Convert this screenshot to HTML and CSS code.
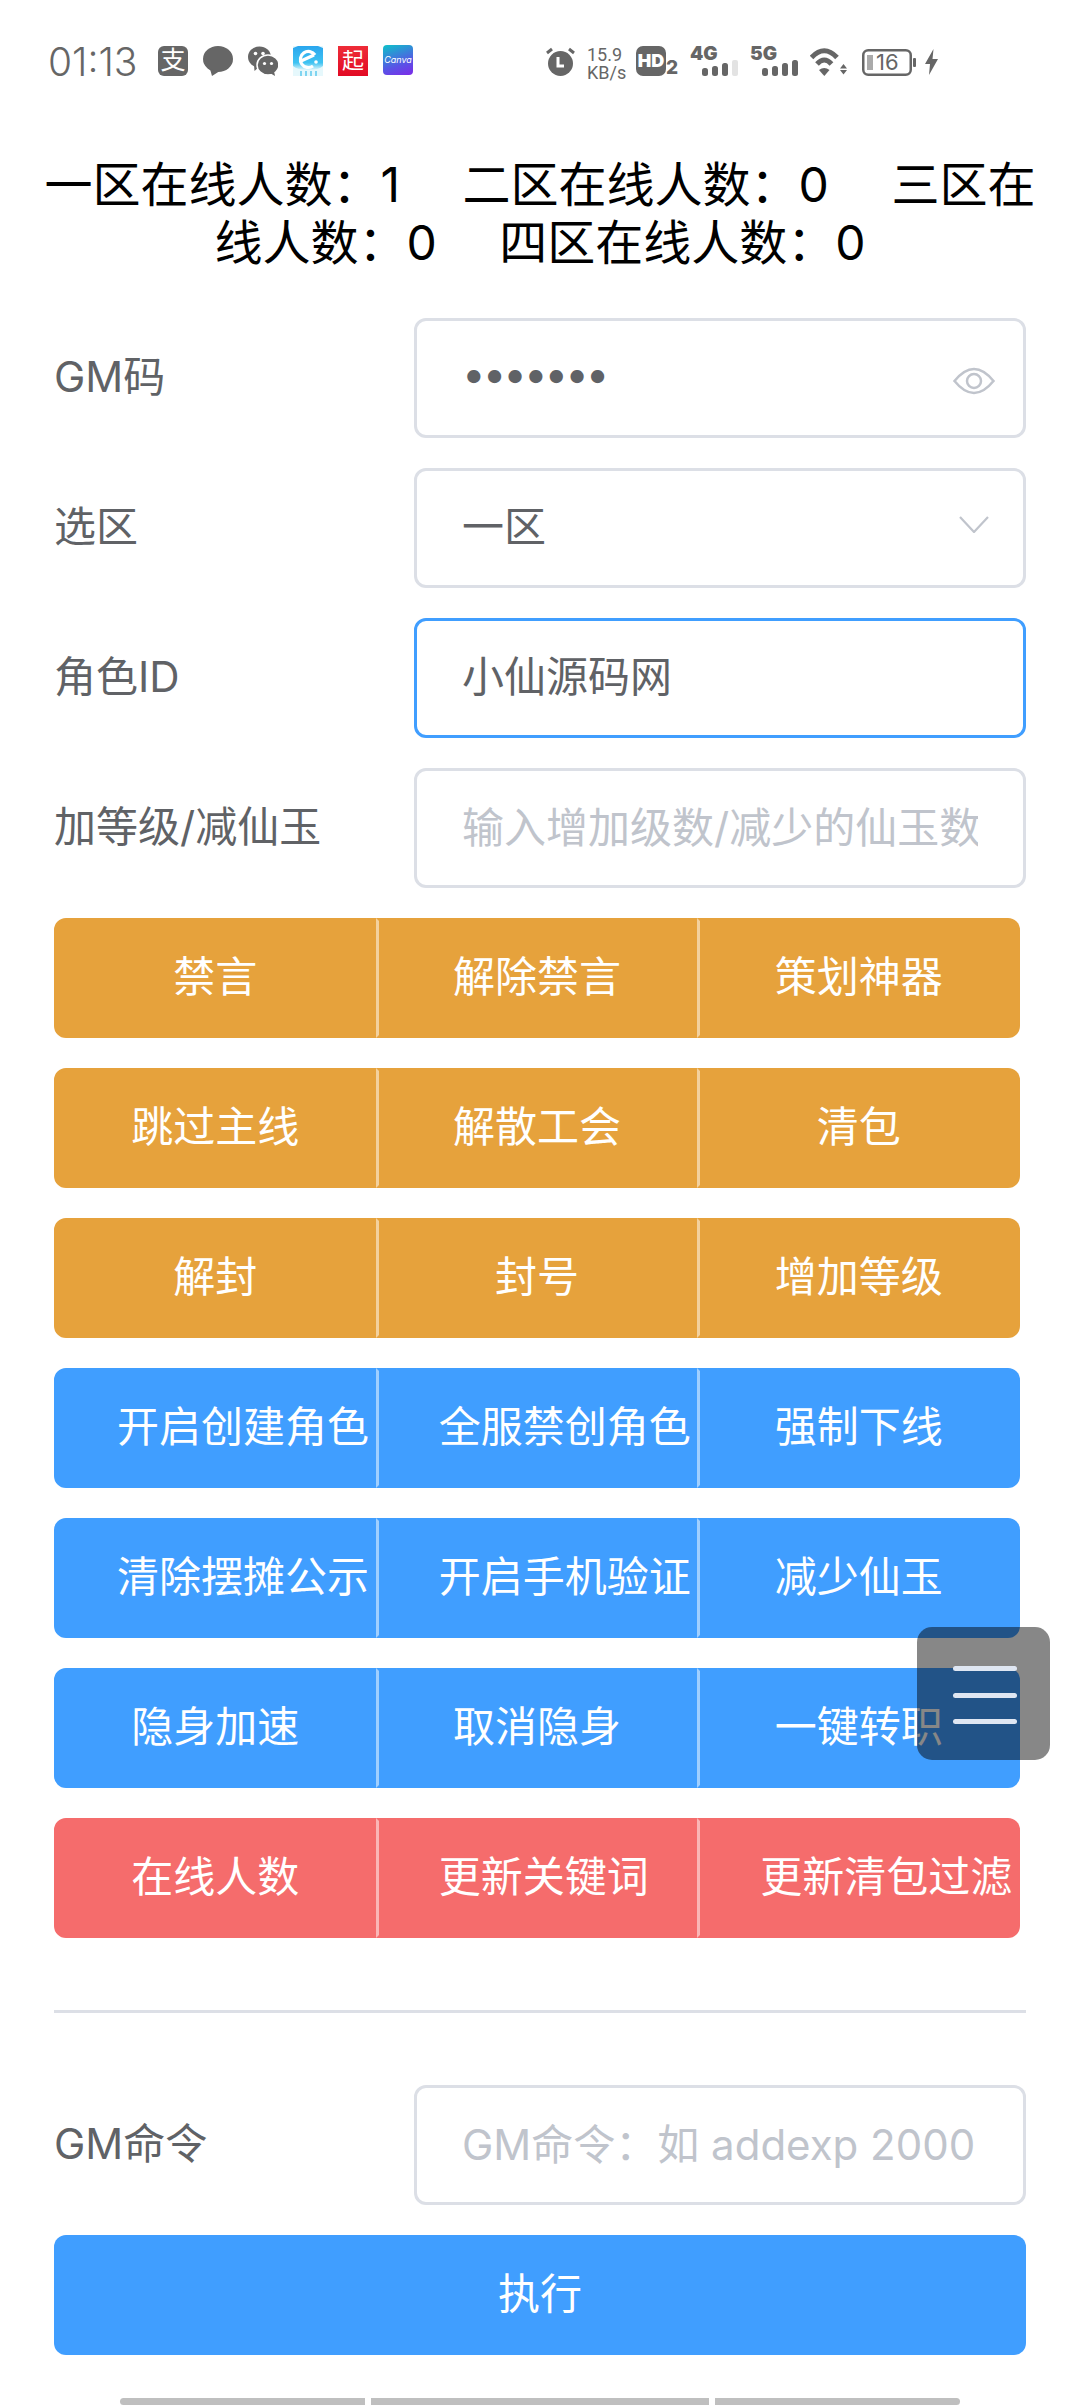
FILE: index.html
```html
<!DOCTYPE html>
<html lang="zh-CN">
<head>
  <meta charset="UTF-8">
  <meta name="viewport" content="width=device-width, initial-scale=1.0">
  <title>GM</title>
  <link rel="stylesheet" href="styles.css">
</head>
<body>
  <div class="status-bar">
    <div class="status-left">
      <span class="time">01:13</span>
      <span class="ic ic-alipay">支</span>
      <svg class="ic" viewBox="0 0 30 30"><ellipse cx="15" cy="13" rx="15" ry="13" fill="#666"/><path d="M7 23 L9 30 L16 25.5 Z" fill="#666"/></svg>
      <svg class="ic" viewBox="0 0 30 30">
        <ellipse cx="11.5" cy="11" rx="11.5" ry="10.5" fill="#666"/>
        <path d="M6 19 L6.5 25 L12 20 Z" fill="#666"/>
        <circle cx="7.5" cy="7.5" r="1.8" fill="#fff"/><circle cx="15" cy="7.5" r="1.8" fill="#fff"/>
        <ellipse cx="20" cy="19" rx="11" ry="10" fill="#666" stroke="#fff" stroke-width="1.5"/>
        <path d="M22 27 L27 30 L26 25 Z" fill="#666"/>
        <circle cx="16.5" cy="17.5" r="1.6" fill="#fff"/><circle cx="23.5" cy="17.5" r="1.6" fill="#fff"/>
      </svg>
      <svg class="ic" viewBox="0 0 30 30">
        <defs><linearGradient id="eg" x1="0" y1="0" x2="0" y2="1"><stop offset="0" stop-color="#2aa6ee"/><stop offset=".7" stop-color="#3fc3f2"/><stop offset="1" stop-color="#dff6fb"/></linearGradient></defs>
        <rect width="30" height="30" fill="#e6f8fc"/>
        <path d="M0 2 L5 0 H25 L30 2 V20 Q26 24 15 24 Q4 24 0 20 Z" fill="url(#eg)"/>
        <path d="M22 9 A8 8 0 1 0 20 20 M8 15 L21 9" fill="none" stroke="#fff" stroke-width="3.2"/>
        <circle cx="23" cy="16" r="1.8" fill="#fff"/>
        <path d="M8 25 V30 M13 25 V30 M18 25 V30 M23 25 V30" stroke="#7fd4f0" stroke-width="2"/>
      </svg>
      <span class="ic ic-qi">起</span>
      <span class="ic ic-canva">Canva</span>
    </div>
    <div class="status-right">
      <svg class="ic-alarm" viewBox="0 0 29 30">
        <circle cx="14.5" cy="17.5" r="12.5" fill="#666"/>
        <path d="M1 7 L6 3 M28 7 L23 3" stroke="#666" stroke-width="3"/>
        <path d="M12 11 V20 H18" fill="none" stroke="#fff" stroke-width="3"/>
      </svg>
      <div class="speed"><div>15.9</div><div>KB/s</div></div>
      <span class="ic-hd">HD</span><span class="hd-num">2</span>
      <svg class="signal" viewBox="0 -8 48 38">
        <text x="0" y="14" class="signal-text">4G</text>
        <rect x="12" y="22" width="6" height="8" rx="2.5" fill="#666"/>
        <rect x="22" y="20" width="6" height="10" rx="2.5" fill="#666"/>
        <rect x="32" y="17" width="6" height="13" rx="2.5" fill="#666"/>
        <rect x="42" y="14" width="6" height="16" rx="2" fill="#e3e3e3"/>
      </svg>
      <svg class="signal" viewBox="0 -8 48 38">
        <text x="0" y="14" class="signal-text">5G</text>
        <rect x="12" y="22" width="6" height="8" rx="2.5" fill="#666"/>
        <rect x="22" y="20" width="6" height="10" rx="2.5" fill="#666"/>
        <rect x="32" y="17" width="6" height="13" rx="2.5" fill="#666"/>
        <rect x="42" y="14" width="6" height="16" rx="2.5" fill="#666"/>
      </svg>
      <svg class="wifi" viewBox="0 0 37 29">
        <path d="M1.5 10.5 Q14.3 -3 27 10.5 M7 17 Q14.3 9 21.5 17" fill="none" stroke="#666" stroke-width="5"/>
        <path d="M9 23 L14.3 29 L19.5 23 Q14.3 19 9 23 Z" fill="#666"/>
        <path d="M30 21.5 L33.5 17 L37 21.5 Z M30 23 L37 23 L33.5 27.5 Z" fill="#666"/>
      </svg>
      <svg class="battery" viewBox="0 0 54 27">
        <rect x="1.25" y="1.25" width="47.5" height="24.5" rx="5" fill="none" stroke="#666" stroke-width="2.5"/>
        <rect x="5" y="6" width="6" height="15" fill="#aaa"/>
        <text x="14" y="21" class="battery-text">16</text>
        <rect x="51" y="9" width="3" height="9" rx="1" fill="#666"/>
      </svg>
      <svg class="bolt" viewBox="0 0 13 26"><path d="M8.5 0 L0 15 H5 L4 26 L13 10 H7.5 Z" fill="#666"/></svg>
    </div>
  </div>

  <p class="online">一区在线人数：1 &nbsp;&nbsp;&nbsp; 二区在线人数：0 &nbsp;&nbsp;&nbsp; 三区在线人数：0 &nbsp;&nbsp;&nbsp; 四区在线人数：0</p>

  <div class="form-row">
    <label class="form-label">GM码</label>
    <div class="input-wrap">
      <input class="input input-pass" type="password" value="1234567">
      <svg class="input-icon eye" viewBox="0 0 42 30">
        <path d="M1.5 15 Q21 -9 40.5 15 Q21 39 1.5 15 Z" fill="none" stroke="#c0c4cc" stroke-width="2.5"/>
        <circle cx="21" cy="15" r="7" fill="none" stroke="#c0c4cc" stroke-width="2.5"/>
      </svg>
    </div>
  </div>
  <div class="form-row">
    <label class="form-label">选区</label>
    <div class="input-wrap">
      <input class="input" type="text" value="一区" readonly>
      <svg class="input-icon chevron" viewBox="0 0 30 17"><path d="M1 1 L15 16 L29 1" fill="none" stroke="#c0c4cc" stroke-width="2.2"/></svg>
    </div>
  </div>
  <div class="form-row">
    <label class="form-label">角色ID</label>
    <div class="input-wrap">
      <input class="input is-focus" type="text" value="小仙源码网">
    </div>
  </div>
  <div class="form-row">
    <label class="form-label">加等级/减仙玉</label>
    <div class="input-wrap">
      <input class="input" type="text" placeholder="输入增加级数/减少的仙玉数">
    </div>
  </div>

  <div class="btn-group">
    <button class="btn warning">禁言</button>
    <button class="btn warning">解除禁言</button>
    <button class="btn warning">策划神器</button>
  </div>
  <div class="btn-group">
    <button class="btn warning">跳过主线</button>
    <button class="btn warning">解散工会</button>
    <button class="btn warning">清包</button>
  </div>
  <div class="btn-group">
    <button class="btn warning">解封</button>
    <button class="btn warning">封号</button>
    <button class="btn warning">增加等级</button>
  </div>
  <div class="btn-group">
    <button class="btn primary">开启创建角色</button>
    <button class="btn primary">全服禁创角色</button>
    <button class="btn primary">强制下线</button>
  </div>
  <div class="btn-group">
    <button class="btn primary">清除摆摊公示</button>
    <button class="btn primary">开启手机验证</button>
    <button class="btn primary">减少仙玉</button>
  </div>
  <div class="btn-group">
    <button class="btn primary">隐身加速</button>
    <button class="btn primary">取消隐身</button>
    <button class="btn primary">一键转职</button>
  </div>
  <div class="btn-group">
    <button class="btn danger">在线人数</button>
    <button class="btn danger">更新关键词</button>
    <button class="btn danger">更新清包过滤</button>
  </div>

  <div class="divider"></div>

  <div class="form-row">
    <label class="form-label">GM命令</label>
    <div class="input-wrap">
      <input class="input" type="text" placeholder="GM命令：如 addexp 2000">
    </div>
  </div>
  <button class="run-btn">执行</button>

  <div class="scroll-bar">
    <span class="seg seg-side"></span>
    <span class="seg seg-mid"></span>
    <span class="seg seg-side"></span>
  </div>

  <div class="float-menu">
    <span></span>
    <span></span>
    <span></span>
  </div>
</body>
</html>
```

FILE: styles.css
```css
* {
  box-sizing: border-box;
}

html, body {
  height: 2408px;
  overflow: hidden;
}

body {
  position: relative;
  margin: 0;
  background: #fff;
  font-family: Inter, "Noto Sans CJK SC", sans-serif;
}

/* status bar */
.status-bar {
  display: flex;
  justify-content: space-between;
  align-items: flex-start;
  height: 76px;
  padding: 46px 142px 0 48px;
}

.status-left, .status-right {
  display: flex;
  align-items: flex-start;
}

.time {
  width: 110px;
  font-size: 39px;
  font-weight: 300;
  line-height: 32px;
  color: #666;
}

.ic {
  display: block;
  flex: none;
  width: 30px;
  height: 30px;
  margin-right: 15px;
}

.ic-alipay {
  background: #666;
  border-radius: 6px;
  color: #fff;
  font-size: 25px;
  line-height: 29px;
  text-align: center;
}

.ic-qi {
  background: linear-gradient(#ee2c38, #e20a24);
  color: #fff;
  font-size: 22px;
  line-height: 29px;
  text-align: center;
}

.ic-canva {
  margin: -1px 0 0;
  background: linear-gradient(160deg, #0cc3c9, #5a52e6 65%, #7d2ae8);
  border-radius: 4px;
  color: #fff;
  font-size: 9px;
  font-style: italic;
  line-height: 30px;
  text-align: center;
}

.ic-alarm {
  width: 29px;
  height: 30px;
  margin-right: 12px;
}

.speed {
  width: 36px;
  margin-right: 13px;
  color: #666;
  font-family: Roboto, sans-serif;
  font-size: 18px;
  line-height: 17.5px;
}

.ic-hd {
  width: 30px;
  height: 30px;
  background: #666;
  border-radius: 7px;
  color: #fff;
  font-size: 18px;
  font-weight: 900;
  line-height: 30px;
  text-align: center;
}

.hd-num {
  width: 12px;
  margin: 14px 12px 0 0;
  color: #666;
  font-size: 19px;
  font-weight: 800;
  line-height: 16px;
}

.signal {
  width: 48px;
  height: 38px;
  margin: -8px 12px 0 0;
}

.signal-text {
  font-size: 19px;
  font-weight: 900;
  fill: #666;
}

.wifi {
  width: 37px;
  height: 29px;
  margin: 1px 15px 0 0;
}

.battery {
  width: 54px;
  height: 27px;
  margin: 3px 9px 0 0;
}

.battery-text {
  font-size: 22px;
  fill: #666;
}

.bolt {
  width: 13px;
  height: 26px;
  margin-top: 3px;
}

/* online counts */
.online {
  margin: 80px 0 46px;
  padding: 0 36px;
  font-size: 48px;
  line-height: 58px;
  word-spacing: -1px;
  text-align: center;
  color: #000;
}

/* form */
.form-row {
  display: flex;
  align-items: center;
  height: 120px;
  margin: 0 54px 30px;
}

.form-label {
  flex: 0 0 360px;
  padding-bottom: 9px;
  font-size: 42px;
  color: #606266;
}

.input-wrap {
  position: relative;
  flex: 1;
  height: 120px;
}

.input {
  display: block;
  width: 100%;
  height: 120px;
  padding: 0 45px 10px;
  border: 3px solid #dcdfe6;
  border-radius: 12px;
  outline: none;
  background: #fff;
  color: #606266;
  font-family: inherit;
  font-size: 42px;
}

.input-pass {
  letter-spacing: -3px;
}

.input::placeholder {
  color: #c0c4cc;
  transform: translateY(3.5px);
}

.input.is-focus {
  border-color: #409eff;
}

.input-icon {
  position: absolute;
}

.eye {
  top: 48px;
  right: 31px;
  width: 42px;
  height: 30px;
}

.chevron {
  top: 48px;
  right: 37px;
  width: 30px;
  height: 17px;
}

/* button groups */
.btn-group {
  display: flex;
  width: 966px;
  height: 120px;
  margin: 0 0 30px 54px;
}

.btn {
  flex: 1 1 0;
  min-width: 0;
  height: 120px;
  margin-left: -1px;
  padding: 0 60px 10px;
  border: 3px solid;
  color: #fff;
  font-family: inherit;
  font-size: 42px;
  white-space: nowrap;
}

.btn:first-child {
  margin-left: 0;
  border-radius: 12px 0 0 12px;
}

.btn:last-child {
  border-radius: 0 12px 12px 0;
}

.warning {
  background: #e6a23c;
  border-color: #e6a23c;
  border-left-color: rgba(255, 255, 255, .5);
}

.primary {
  background: #409eff;
  border-color: #409eff;
  border-left-color: rgba(255, 255, 255, .5);
}

.danger {
  background: #f56c6c;
  border-color: #f56c6c;
  border-left-color: rgba(255, 255, 255, .5);
}

.btn:first-child.warning { border-left-color: #e6a23c; }
.btn:first-child.primary { border-left-color: #409eff; }
.btn:first-child.danger { border-left-color: #f56c6c; }

.divider {
  height: 3px;
  margin: 72px 54px 72px;
  background: #dcdfe6;
}

.run-btn {
  display: block;
  width: 972px;
  height: 120px;
  margin-left: 54px;
  padding-bottom: 10px;
  border: none;
  border-radius: 12px;
  background: #409eff;
  color: #fff;
  font-family: inherit;
  font-size: 42px;
}

/* bottom bar */
.scroll-bar {
  display: flex;
  gap: 6px;
  width: 840px;
  height: 7px;
  margin: 43px 0 0 120px;
}

.seg {
  background: #bfbfbf;
}

.seg-side {
  width: 245px;
}

.seg-mid {
  width: 338px;
}

.seg:first-child {
  border-radius: 4px 0 0 4px;
}

.seg:last-child {
  border-radius: 0 4px 4px 0;
}

/* floating menu */
.float-menu {
  position: absolute;
  top: 1627px;
  left: 917px;
  display: flex;
  flex-direction: column;
  gap: 21.5px;
  width: 133px;
  height: 133px;
  padding: 39px 33px 0 36px;
  border-radius: 15px;
  background: rgba(0, 0, 0, .47);
}

.float-menu span {
  height: 5px;
  border-radius: 3px;
  background: #dfe6f2;
}
```
